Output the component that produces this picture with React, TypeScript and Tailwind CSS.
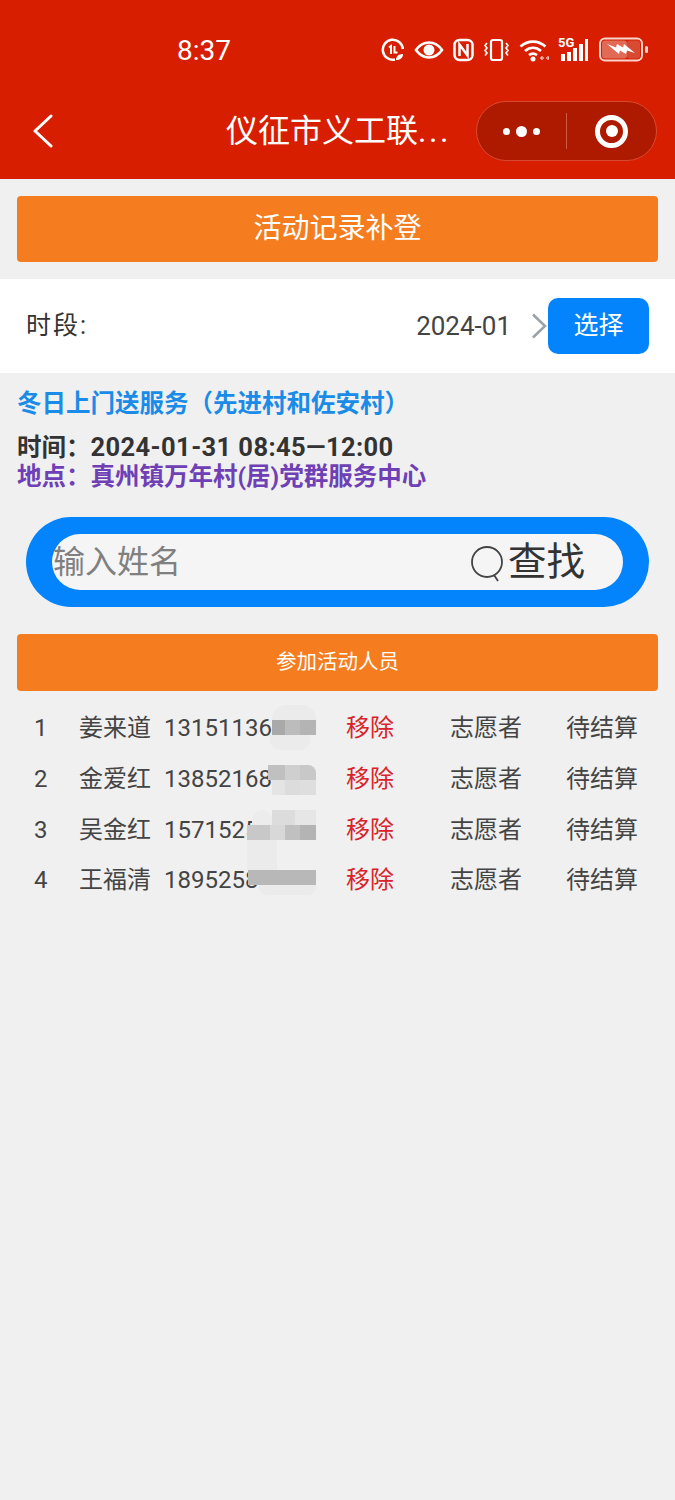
const cjk = 'font-["Roboto","Noto_Sans_CJK_SC",sans-serif]'

const people = [
  { no: 1, name: '姜来道', phone: '13151136' },
  { no: 2, name: '金爱红', phone: '13852168' },
  { no: 3, name: '吴金红', phone: '1571525' },
  { no: 4, name: '王福清', phone: '1895258' },
]

function StatusIcons() {
  return (
    <div className="flex items-center gap-[9px] text-white mt-[2px]">
      {/* data saver */}
      <svg width="24" height="24" viewBox="0 0 24 24" fill="none" stroke="currentColor" strokeWidth="2.500">
        <path d="M14 21.500A10 10 0 1 1 21.800 11" />
        <path d="M8 9.500l2-1.500v8M13.500 8v6.500h3" strokeWidth="2" />
        <path d="M15 22c0-4 3-6 7-6 0 4-3 6-7 6z" fill="currentColor" stroke="none" />
      </svg>
      {/* eye */}
      <svg width="30" height="24" viewBox="0 0 30 24" fill="none" stroke="currentColor" strokeWidth="2.600">
        <path d="M2 12c3.500-5 8-7.500 13-7.500S24.500 7 28 12c-3.500 5-8 7.500-13 7.500S5.500 17 2 12z" />
        <circle cx="15" cy="12" r="5.500" fill="currentColor" stroke="none" />
      </svg>
      {/* nfc */}
      <svg width="21" height="24" viewBox="0 0 21 24" fill="none" stroke="currentColor" strokeWidth="2.500">
        <rect x="1.500" y="2" width="18" height="20" rx="5" />
        <path d="M6.500 18V6.500l8 11V6" />
      </svg>
      {/* vibrate */}
      <svg width="27" height="24" viewBox="0 0 27 24" fill="none" stroke="currentColor" strokeWidth="2.200">
        <rect x="8" y="2" width="11" height="20" rx="2" />
        <path d="M4 5l-2 2.500 2 2.500-2 2.500 2 2.500-2 2.500M23 5l2 2.500-2 2.500 2 2.500-2 2.500 2 2.500" strokeWidth="1.600" />
      </svg>
      {/* wifi */}
      <svg width="30" height="24" viewBox="0 0 30 24" fill="none" stroke="currentColor" strokeWidth="2.700">
        <path d="M1.500 8.500C9 2 19 2 26.500 8.500M6 13c5-4.200 11-4.200 16 0M10 17.200c2.700-2 5.300-2 8 0" />
        <circle cx="14" cy="21" r="2.500" fill="currentColor" stroke="none" />
        <path d="M22 20h3M27 20h3M23.500 18l-2 2 2 2M28.500 18l2 2-2 2" strokeWidth="1" />
      </svg>
      {/* 5g signal */}
      <div className="relative w-[32px] h-[24px]">
        <span className={`absolute left-0 top-[-2px] text-[13px] leading-[14px] font-bold ${cjk}`}>5G</span>
        <div className="absolute left-[3px] bottom-[1px] flex items-end gap-[2px]">
          <span className="w-[4px] h-[7px] bg-white" />
          <span className="w-[4px] h-[9px] bg-white" />
          <span className="w-[4px] h-[13px] bg-white" />
          <span className="w-[4px] h-[17px] bg-white" />
          <span className="w-[3px] h-[22px] bg-white" />
        </div>
      </div>
      {/* battery */}
      <svg width="50" height="26" viewBox="0 0 50 26" fill="none">
        <rect x="1" y="1.500" width="42" height="22" rx="5" stroke="#f8d5cc" strokeWidth="2" />
        <rect x="3" y="3.500" width="25" height="18" rx="3" fill="#e06a55" />
        <rect x="28" y="3.500" width="13" height="18" rx="3" fill="#d84a32" />
        <path d="M8 7l9 3.500 1-3.500 6 3.500 1-3.500 11 9-8-2.500-1 3.500-6-3.500-1 3.500z" fill="#fff" />
        <rect x="46" y="9" width="3" height="7" rx="1.500" fill="#f8d5cc" />
      </svg>
    </div>
  )
}

export default function App() {
  return (
    <div className={`w-[675px] h-[1500px] bg-[#f0f0f0] overflow-hidden ${cjk}`}>
      <header className="h-[179px] bg-[#d81e00] text-white">
        <div className="h-[101px] flex pl-[177px] pr-[26px] pt-[35px] justify-between items-start">
          <span className="text-[28px] leading-[32px]">8:37</span>
          <StatusIcons />
        </div>
        <div className="flex items-center pl-[33px] pr-[18px]">
          <svg width="20" height="34" viewBox="0 0 20 34" fill="none" stroke="currentColor" strokeWidth="3" strokeLinecap="round" strokeLinejoin="round" className="shrink-0">
            <path d="M18 2L2 17l16 15" />
          </svg>
          <h1 className="ml-[173px] w-[232px] text-[32px] leading-[60px] whitespace-nowrap">仪征市义工联<span className="tracking-[2.500px]">...</span></h1>
          <div className="ml-auto w-[181px] h-[60px] rounded-full bg-[#ad1a00] border border-[#d84a30] flex items-center">
            <div className="w-[89px] flex items-center justify-center gap-[6px]">
              <span className="w-[7px] h-[7px] rounded-full bg-white" />
              <span className="w-[11px] h-[11px] rounded-full bg-white" />
              <span className="w-[7px] h-[7px] rounded-full bg-white" />
            </div>
            <div className="w-px h-[36px] bg-[#cf5a45]" />
            <div className="flex-1 flex justify-center">
              <div className="w-[33px] h-[33px] rounded-full border-[5px] border-white flex items-center justify-center">
                <span className="w-[12px] h-[12px] rounded-full bg-white" />
              </div>
            </div>
          </div>
        </div>
      </header>

      <div className="px-[17px] pt-[17px]">
        <div className="h-[66px] rounded-[4px] bg-[#f57d20] text-white text-[28px] flex items-center justify-center">活动记录补登</div>
      </div>

      <div className="mt-[17px] h-[94px] bg-white flex items-center pl-[26px] pr-[26px] text-[#333]">
        <span className="text-[25px] tracking-[2px]">时段:</span>
        <span className="ml-auto text-[26px] text-[#444]">2024-01</span>
        <svg width="16" height="26" viewBox="0 0 16 26" fill="none" stroke="#98a2a8" strokeWidth="2.500" className="ml-[20px] shrink-0">
          <path d="M2 1.500L14 13 2 24.500" />
        </svg>
        <div className="ml-[1px] w-[101px] h-[56px] rounded-[10px] bg-[#0384fc] text-white text-[25px] flex items-center justify-center">选择</div>
      </div>

      <div className="px-[17px]">
        <p className="mt-[15px] text-[24.500px] leading-[32px] font-bold text-[#1a8ce8]">冬日上门送服务（先进村和佐安村）</p>
        <p className="mt-[13px] text-[24.500px] leading-[29px] font-bold text-[#333]">时间：<span className="text-[25.500px] tracking-[0.400px]">2024-01-31 08:45—12:00</span></p>
        <p className="text-[24.500px] leading-[29px] font-bold text-[#6f3fb5]">地点：真州镇万年村(居)党群服务中心</p>
      </div>

      <div className="mx-[26px] mt-[26px] h-[90px] rounded-full bg-[#0384fc] py-[17px] px-[26px]">
        <div className="h-[56px] rounded-full bg-[#f5f5f6] flex items-center pr-[38px]">
          <span className="ml-[1px] text-[32px] text-[#808080]">输入姓名</span>
          <svg width="36" height="36" viewBox="0 0 36 36" fill="none" stroke="#444" strokeWidth="1.800" className="ml-auto mt-[3px] mr-[2px]">
            <circle cx="17" cy="16" r="15" />
            <path d="M24 29l4 6" />
          </svg>
          <span className="text-[38.500px] text-[#333]">查找</span>
        </div>
      </div>

      <div className="px-[17px] mt-[27px]">
        <div className="h-[57px] rounded-[4px] bg-[#f57d20] text-white text-[20.500px] flex items-center justify-center">参加活动人员</div>
      </div>

      <div className="relative mt-[12px]">
        {people.map((p) => (
          <div key={p.no} className="h-[50.700px] flex items-center text-[24px] text-[#444]">
            <span className="w-[79px] pl-[34px]">{p.no}</span>
            <span className="w-[85px]">{p.name}</span>
            <span className="w-[182px]">{p.phone}</span>
            <span className="w-[104px] text-[#d8232a]">移除</span>
            <span className="w-[116px]">志愿者</span>
            <span>待结算</span>
          </div>
        ))}
        {/* mosaic over the phone numbers */}
        <div className="absolute left-[245px] top-[2px] w-[71px] flex flex-col blur-[0.6px]">
          <div className="ml-[27px] w-[44px] h-[15px] rounded-t-[14px] bg-[#ebebeb]" />
          <div className="ml-[27px] w-[44px] h-[15px] flex">
            <div className="w-[13px] bg-[#a9a9a9]" />
            <div className="w-[15px] bg-[#bcbcbc]" />
            <div className="flex-1 bg-[#b4b4b4]" />
          </div>
          <div className="ml-[25px] w-[40px] h-[15px] rounded-b-[10px] bg-[#ebebeb]" />
          <div className="h-[15px]" />
          <div className="ml-[23px] w-[48px] h-[15px] flex rounded-tr-[8px] overflow-hidden">
            <div className="w-[17px] bg-[#c0c0c0]" />
            <div className="w-[15px] bg-[#cfcfcf]" />
            <div className="flex-1 bg-[#c8c8c8]" />
          </div>
          <div className="ml-[27px] w-[44px] h-[15px] flex">
            <div className="w-[13px] bg-[#e4e4e4]" />
            <div className="w-[15px] bg-[#dcdcdc]" />
            <div className="flex-1 bg-[#dedede]" />
          </div>
          <div className="h-[15px]" />
          <div className="ml-[7px] w-[64px] h-[15px] flex">
            <div className="w-[20px] rounded-t-[10px] bg-[#ececec]" />
            <div className="w-[23px] bg-[#dcdcdc]" />
            <div className="flex-1 bg-[#e6e6e6]" />
          </div>
          <div className="ml-[2px] w-[69px] h-[15px] flex">
            <div className="w-[23px] bg-[#c8c8c8]" />
            <div className="w-[15px] bg-[#d8d8d8]" />
            <div className="w-[15px] bg-[#c0c0c0]" />
            <div className="flex-1 bg-[#b4b4b4]" />
          </div>
          <div className="ml-[2px] w-[30px] h-[30px] bg-[#ebebeb]" />
          <div className="ml-[3px] w-[68px] h-[15px] bg-[#b8b8b8]" />
          <div className="ml-[14px] w-[57px] h-[10px] rounded-b-[8px] bg-[#ebebeb]" />
        </div>
      </div>
    </div>
  )
}
